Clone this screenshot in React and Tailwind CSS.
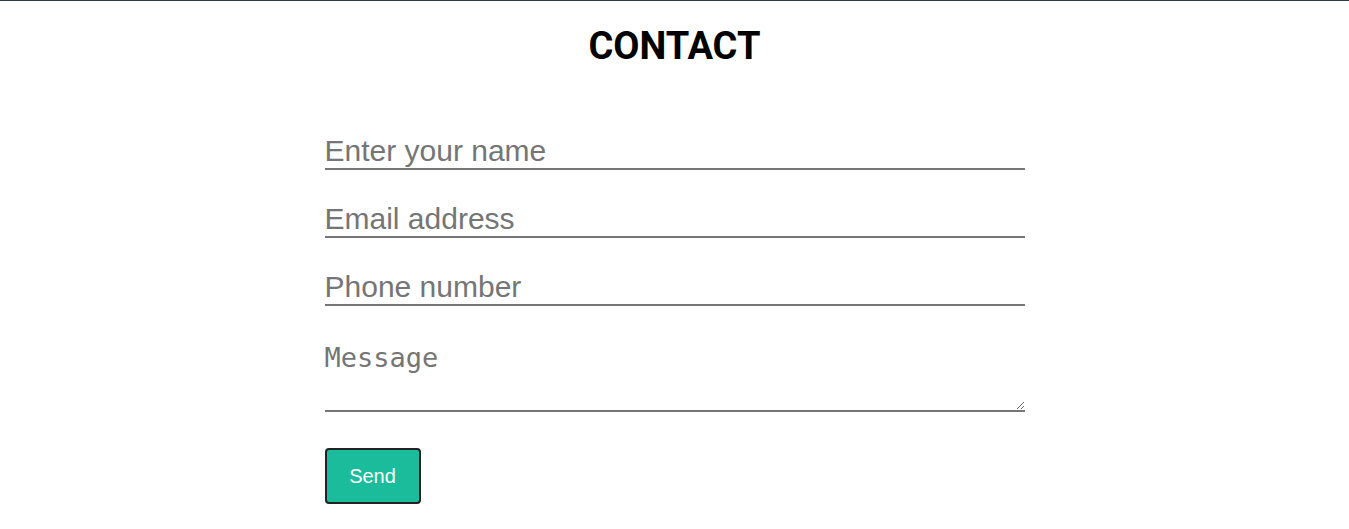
export default function App() {
  return (
    <div className="min-h-screen bg-white border-t border-[#2c3e50]">
      <h1 className="mt-[26px] text-center text-[38px] leading-none font-bold text-black font-['Roboto',sans-serif]">
        CONTACT
      </h1>
      <form
        className="w-[700px] mx-auto mt-[69px] flex flex-col"
        onSubmit={(e) => e.preventDefault()}
      >
        <input
          type="text"
          placeholder="Enter your name"
          className="h-[36px] p-0 pb-[2px] border-0 border-b-2 border-[#767676] text-[30px] font-['Liberation_Sans',Arial,sans-serif] placeholder:text-[#757575] outline-none"
        />
        <input
          type="email"
          placeholder="Email address"
          className="mt-[32px] h-[36px] p-0 pb-[2px] border-0 border-b-2 border-[#767676] text-[30px] font-['Liberation_Sans',Arial,sans-serif] placeholder:text-[#757575] outline-none"
        />
        <input
          type="tel"
          placeholder="Phone number"
          className="mt-[32px] h-[36px] p-0 pb-[2px] border-0 border-b-2 border-[#767676] text-[30px] font-['Liberation_Sans',Arial,sans-serif] placeholder:text-[#757575] outline-none"
        />
        <textarea
          placeholder="Message"
          className="mt-[32px] h-[74px] p-0 border-0 border-b-2 border-[#767676] text-[27px] font-['DejaVu_Sans_Mono',monospace] placeholder:text-[#757575] outline-none"
        />
        <button
          type="submit"
          className="mt-[36px] w-[96px] h-[56px] bg-[#1abc9c] border-2 border-[#222] rounded-[4px] text-white text-[20px] font-['Liberation_Sans',Arial,sans-serif]"
        >
          Send
        </button>
      </form>
    </div>
  );
}
